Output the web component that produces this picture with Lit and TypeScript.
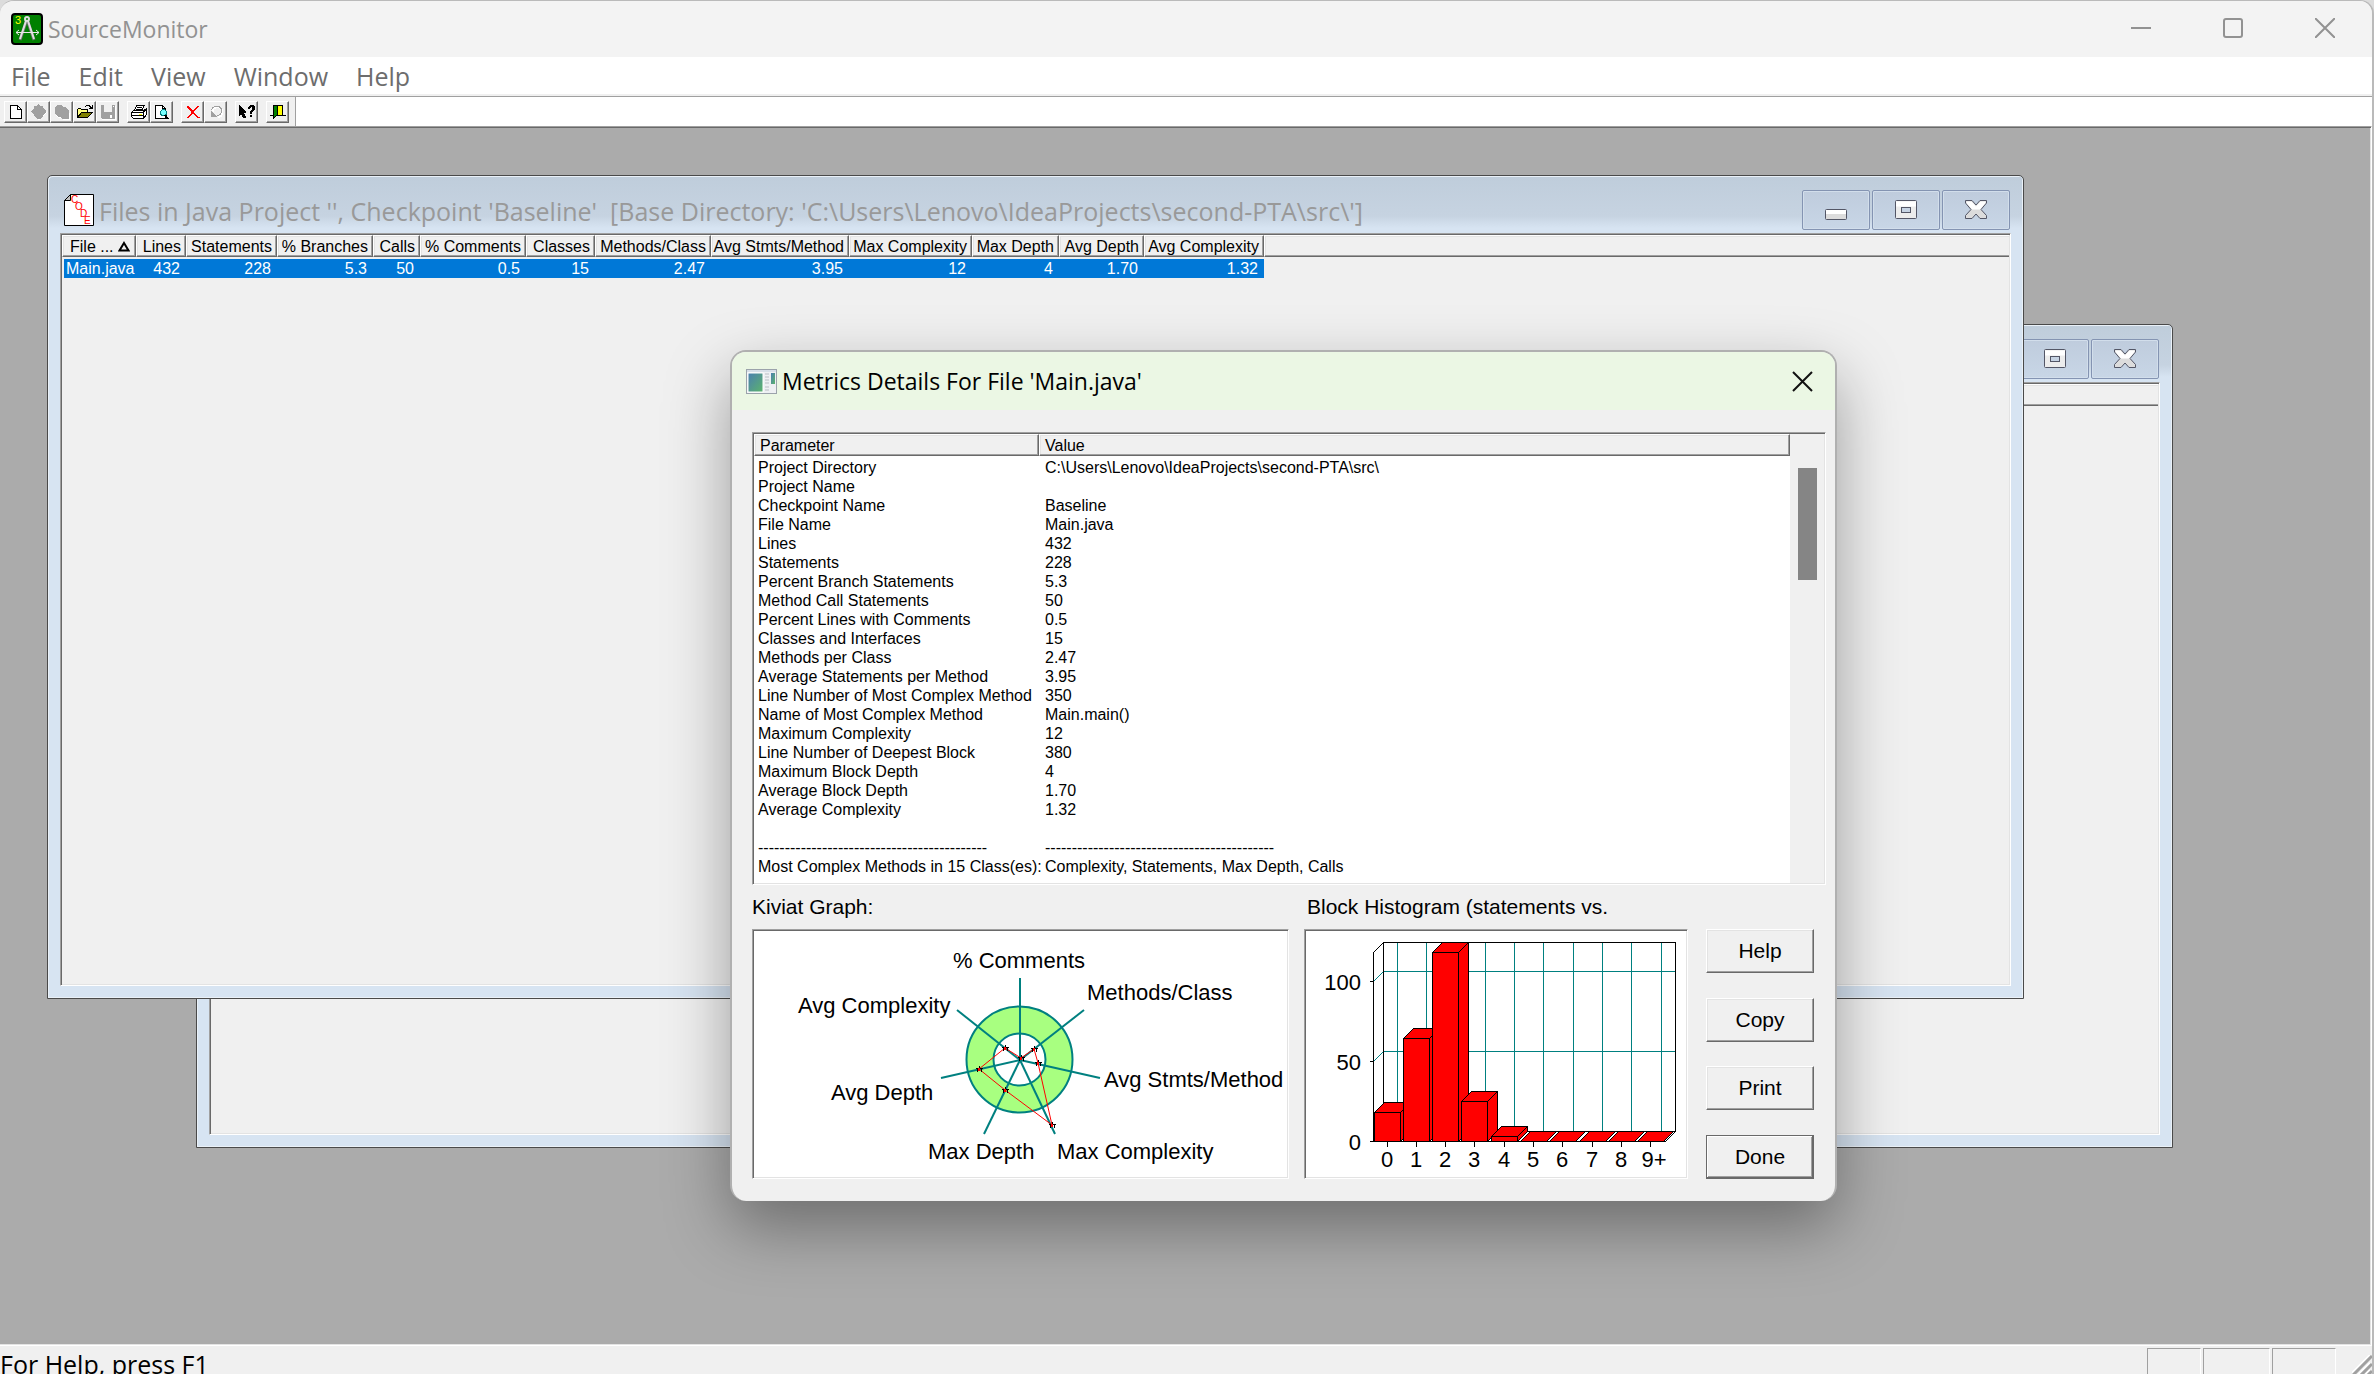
import { LitElement, html, svg, css, nothing, TemplateResult } from "lit";
import { customElement, property } from "lit/decorators.js";
import { classMap } from "lit/directives/class-map.js";

interface Column {
  name: string;
  value: string;
  width: number;
}

const COLUMNS: Column[] = [
  { name: "File ...", value: "Main.java", width: 74 },
  { name: "Lines", value: "432", width: 50 },
  { name: "Statements", value: "228", width: 91 },
  { name: "% Branches", value: "5.3", width: 96 },
  { name: "Calls", value: "50", width: 47 },
  { name: "% Comments", value: "0.5", width: 106 },
  { name: "Classes", value: "15", width: 69 },
  { name: "Methods/Class", value: "2.47", width: 116 },
  { name: "Avg Stmts/Method", value: "3.95", width: 138 },
  { name: "Max Complexity", value: "12", width: 123 },
  { name: "Max Depth", value: "4", width: 87 },
  { name: "Avg Depth", value: "1.70", width: 85 },
  { name: "Avg Complexity", value: "1.32", width: 120 },
];

const DASHES = "-".repeat(43);

const PARAMETERS: [string, string][] = [
  ["Project Directory", "C:\\Users\\Lenovo\\IdeaProjects\\second-PTA\\src\\"],
  ["Project Name", ""],
  ["Checkpoint Name", "Baseline"],
  ["File Name", "Main.java"],
  ["Lines", "432"],
  ["Statements", "228"],
  ["Percent Branch Statements", "5.3"],
  ["Method Call Statements", "50"],
  ["Percent Lines with Comments", "0.5"],
  ["Classes and Interfaces", "15"],
  ["Methods per Class", "2.47"],
  ["Average Statements per Method", "3.95"],
  ["Line Number of Most Complex Method", "350"],
  ["Name of Most Complex Method", "Main.main()"],
  ["Maximum Complexity", "12"],
  ["Line Number of Deepest Block", "380"],
  ["Maximum Block Depth", "4"],
  ["Average Block Depth", "1.70"],
  ["Average Complexity", "1.32"],
  ["", ""],
  [DASHES, DASHES],
  ["Most Complex Methods in 15 Class(es):", "Complexity, Statements, Max Depth, Calls"],
];

/* Toolbar glyphs, each on a 16 x 16 grid. */
const glyph = (body: TemplateResult) =>
  html`<svg width="16" height="16" viewBox="0 0 16 16" shape-rendering="crispEdges" aria-hidden="true">${body}</svg>`;

const GLYPHS: Record<string, TemplateResult> = {
  New: glyph(svg`
    <path d="M2.500 1.500h7l4 4v9h-11z" fill="#fff" stroke="#000"/>
    <path d="M9.500 1.500v4h4" fill="none" stroke="#000"/>`),
  "New checkpoint": glyph(svg`
    <path d="M8 2l2 2h2l1 2 3 2-3 3-1 2-4 3-4-3z" fill="#fff"/>
    <path d="M7 0l2 2h3v2l3 3v1l-3 3v1l-3 3H7l-4-3v-1L0 8V7l3-3V2h2z" fill="#a0a0a0"/>`),
  "Delete checkpoint": glyph(svg`
    <path d="M5 3h5l4 3 2 4v6H9l-2-2H4L2 11z" fill="#fff"/>
    <path d="M3 1h5l1 2h3l3 4v8H8l-1-2H4l-3-3V3z" fill="#a0a0a0"/>`),
  Open: glyph(svg`
    <path d="M1 5h3l1 1h6v3H5l-4 5z" fill="#ffff80"/>
    <path d="M.5 13.500V5.500l1-1h2l1 1h6v3" fill="none" stroke="#000"/>
    <path d="M.5 13.500l4-5h11l-5 5z" fill="#808000" stroke="#000"/>
    <path d="M8 2h1V1h4v1h1v1h1V1h1v4h-4V4h1V3h-1V2H9v1H8z" fill="#000"/>`),
  Save: glyph(svg`
    <path d="M2 2h14v14H2z" fill="#fff"/>
    <path d="M1 1h14v14H2l-1-1z" fill="#a0a0a0"/>
    <path d="M4 1h8v7H4z" fill="#f0f0f0"/><path d="M13 2h1v1h-1zM10 11h2v3h-2z" fill="#fff"/>`),
  Print: glyph(svg`
    <path d="M5.500 1.500h8l-3 5h-7z" fill="#fff" stroke="#000"/>
    <path d="M6 3h5v1H6zM5 5h5v1H5z" fill="#000"/>
    <path d="M.5 8.500l2-2h10l3-2v6l-3 4h-10l-2-2z" fill="#fff" stroke="#000"/>
    <path d="M1 8.500h11l3-3M12.500 8.500v5M1 11.500h11" fill="none" stroke="#000"/>
    <path d="M8 10h3v1H8z" fill="#ff0"/>`),
  "Print preview": glyph(svg`
    <path d="M1.500 1.500h7l3 3v10h-10z" fill="#fff" stroke="#000"/>
    <path d="M8.500 1.500v3h3" fill="none" stroke="#000"/>
    <circle cx="9.500" cy="8.500" r="3" fill="#7ff" stroke="#008080"/>
    <path d="M11 11l3 4" stroke="#000" stroke-width="2"/>`),
  Delete: glyph(svg`
    <path d="M2 2h2v1h1v1h1v1h1v1h2V5h1V4h1V3h1V2h2v1h-1v1h-1v1h-1v1h-1v1H9v2h1v1h1v1h1v1h1v1h2v1h-3v-1h-1v-1h-1v-1H9v-1H7v1H6v1H5v1H4v1H2v-1h1v-1h1v-1h1v-1h1V7H5V6H4V5H3V4H2z" fill="#f00"/>`),
  Undo: glyph(svg`
    <path d="M4.500 7.500c1-6 10-5 10 0 0 4-3 6-5 6" fill="none" stroke="#fff" stroke-width="2"/>
    <path d="M3.500 6.500c1-6 10-5 10 0 0 4-3 5-5 5" fill="none" stroke="#a0a0a0"/>
    <path d="M3 7l6 6H3z" fill="#a0a0a0"/>`),
  "Context help": glyph(svg`
    <path d="M.5 1.500l6 6v1h-2l2 5h-2l-2-4-2 2z" fill="#000" stroke="#000"/>
    <path d="M9 5V3l2-2h3l2 2v2l-3 3v2h-2V7l2-2V3h-1l-1 2zM11 11h2v2h-2z" fill="#000"/>`),
  Exit: glyph(svg`
    <path d="M6.500 1.500h6v10h-6z" fill="#ff0" stroke="#000"/>
    <path d="M3.500 1.500h4v9l-4 4z" fill="#008000" stroke="#000"/>
    <path d="M0 11.500h4M8 11.500h8" stroke="#000"/>`),
};

const TOOL_GROUPS: string[][] = [
  ["New", "New checkpoint", "Delete checkpoint", "Open", "Save"],
  ["Print", "Print preview"],
  ["Delete", "Undo"],
  ["Context help"],
  ["Exit"],
];

const DISABLED = new Set(["New checkpoint", "Delete checkpoint", "Save", "Undo"]);

@customElement("kiviat-graph")
export class KiviatGraph extends LitElement {
  static styles = css`
    :host { display: block; }
    svg { display: block; }
    text { font: 22px "Liberation Sans", Arial, sans-serif; fill: #000; }
  `;

  private axes: { x: number; y: number; label: string; lx: number; ly: number }[] = [
    { x: 266, y: 47, label: "% Comments", lx: 199, ly: 37 },
    { x: 330, y: 79, label: "Methods/Class", lx: 333, ly: 69 },
    { x: 346, y: 147, label: "Avg Stmts/Method", lx: 350, ly: 156 },
    { x: 301, y: 203, label: "Max Complexity", lx: 303, ly: 228 },
    { x: 230, y: 203, label: "Max Depth", lx: 174, ly: 228 },
    { x: 187, y: 147, label: "Avg Depth", lx: 77, ly: 169 },
    { x: 203, y: 79, label: "Avg Complexity", lx: 44, ly: 82 },
  ];

  private points: [number, number][] = [
    [267, 127], [280, 118], [284, 132], [298, 194], [251, 159], [225, 138], [251, 117],
  ];

  render() {
    return html`<svg width="533" height="246" viewBox="0 0 533 246" role="img" aria-label="Kiviat Graph">
      <circle cx="265.5" cy="128.5" r="53" fill="#a8ff80" stroke="#008080" stroke-width="2" />
      <circle cx="265.5" cy="128.5" r="26" fill="#fff" stroke="#008080" stroke-width="2" />
      ${this.axes.map((a) => svg`<line x1="266" y1="129" x2=${a.x} y2=${a.y} stroke="#008080" stroke-width="2"/>`)}
      <polygon points=${this.points.map((p) => p.join(",")).join(" ")} fill="none" stroke="#f00" stroke-width="1" />
      ${this.points.map(
        ([x, y]) => svg`<g transform="translate(${x} ${y})" shape-rendering="crispEdges">
          <path d="M-3 -1H4M-2 3V-1M2 3V-1M0 -3V2" stroke="#000" fill="none"/>
          <rect x="-1" y="-1" width="2" height="3" fill="#f00"/></g>`,
      )}
      ${this.axes.map((a) => svg`<text x=${a.lx} y=${a.ly}>${a.label}</text>`)}
    </svg>`;
  }
}

@customElement("block-histogram")
export class BlockHistogram extends LitElement {
  static styles = css`
    :host { display: block; }
    svg { display: block; }
    text { font: 22px "Liberation Sans", Arial, sans-serif; fill: #000; }
    .x { text-anchor: middle; }
    .y { text-anchor: end; }
  `;

  private bars: { x: number; top: number; label: string }[] = [
    { x: 68, top: 181, label: "0" },
    { x: 97, top: 107, label: "1" },
    { x: 126, top: 21, label: "2" },
    { x: 155, top: 170, label: "3" },
    { x: 185, top: 205, label: "4" },
    { x: 214, top: 210, label: "5" },
    { x: 243, top: 210, label: "6" },
    { x: 273, top: 210, label: "7" },
    { x: 302, top: 210, label: "8" },
    { x: 331, top: 210, label: "9+" },
  ];

  private bar(x: number, top: number) {
    const r = x + 26;
    return svg`
      <path d="M${x} ${top}l10 -10H${r + 10}L${r} ${top}z"/>
      <path d="M${r} ${top}l10 -10V200L${r} 210z"/>
      <path d="M${x} ${top}H${r}V210H${x}z"/>`;
  }

  render() {
    return html`<svg width="380" height="246" viewBox="0 0 380 246" role="img" aria-label="Block Histogram">
      <g transform="translate(0.5 0.5)" shape-rendering="crispEdges" fill="none" stroke="#000">
        <path
          d="M77 40H369M77 120H369M67 50l10 -10M67 130l10 -10M91 11V200M120 11V200M150 11V200M179 11V200M208 11V200M237 11V200M267 11V200M296 11V200M325 11V200M355 11V200"
          stroke="#008080"
        />
        <path d="M77 11H369V200H77zM77 11L67 21V210H359L369 200M67 210l10 -10" />
        <path d="M63 50H67M63 130H67M63 210H67" />
        ${this.bars.map((b) => svg`<path d="M${b.x + 13} 210v5"/>`)}
        <g fill="#f00">${this.bars.map((b) => this.bar(b.x, b.top))}</g>
      </g>
      <text class="y" x="55" y="59">100</text>
      <text class="y" x="55" y="139">50</text>
      <text class="y" x="55" y="219">0</text>
      ${this.bars.map((b) => svg`<text class="x" x=${b.label === "9+" ? b.x + 17 : b.x + 13} y="236">${b.label}</text>`)}
    </svg>`;
  }
}

@customElement("metrics-dialog")
export class MetricsDialog extends LitElement {
  static styles = css`
    :host {
      display: block;
      box-sizing: border-box;
      border: 2px solid #b0b0b0;
      border-bottom: 0;
      border-radius: 16px;
      background: #f0f0f0;
      box-shadow: 0 26px 64px rgba(0, 0, 0, 0.36);
      overflow: hidden;
      font-family: "Liberation Sans", Arial, sans-serif;
      color: #000;
    }
    .title {
      display: flex;
      align-items: center;
      height: 58px;
      padding: 0 22px 0 14px;
      background: #ebf7e4;
    }
    .title svg { display: block; flex: none; }
    .title h2 {
      flex: 1;
      margin: 0 0 0 5px;
      font: 23px/32px "Open Sans", "Segoe UI", sans-serif;
      white-space: nowrap;
    }
    .close { border: 0; padding: 0; background: none; }
    .body { padding: 22px 9px 22px 20px; }
    .sunken {
      border: 1px solid;
      border-color: #a0a0a0 #fff #fff #a0a0a0;
      box-shadow: inset 1px 1px #696969, inset -1px -1px #e3e3e3;
      padding: 1px;
      background: #fff;
    }
    .list { display: flex; height: 449px; overflow: hidden; }
    .rows { flex: 1; min-width: 0; }
    table { width: 100%; border-collapse: separate; border-spacing: 0; table-layout: fixed; }
    th, td { padding: 0; text-align: left; font-size: 16px; font-weight: 400; line-height: 19px; white-space: nowrap; }
    th {
      box-sizing: border-box;
      height: 22px;
      padding-left: 5px;
      background: #f0f0f0;
      border: 1px solid;
      border-color: #fff #696969 #696969 #fff;
      box-shadow: inset -1px -1px #a0a0a0, inset 1px 1px #e3e3e3;
    }
    td { padding-left: 4px; height: 19px; }
    td + td { padding-left: 6px; }
    tbody tr:first-child td { padding-top: 2px; }
    .name { width: 285px; }
    .scroll { flex: 0 0 34px; box-sizing: border-box; padding: 34px 7px 0 8px; background: #f0f0f0; }
    .thumb { height: 112px; background: #858585; }
    .lower { display: grid; grid-template-columns: 537px 384px 108px; column-gap: 15px; padding-right: 11px; }
    .lower h3 { margin: 0; font-size: 21px; font-weight: 400; line-height: 44px; white-space: nowrap; }
    .lower h3.hist { padding-left: 3px; }
    .buttons { display: flex; flex-direction: column; justify-content: space-between; margin-left: 3px; width: 108px; }
    .buttons button {
      height: 44px;
      padding: 0;
      border: 1px solid;
      border-color: #fff #696969 #696969 #fff;
      box-shadow: inset -1px -1px #a0a0a0, inset 1px 1px #e3e3e3;
      background: #f0f0f0;
      font: 21px "Liberation Sans", Arial, sans-serif;
      color: #000;
    }
    .buttons button.default {
      border-color: #696969;
      box-shadow: inset -1px -1px #696969, inset 1px 1px #fff, inset -2px -2px #a0a0a0;
    }
  `;

  render() {
    return html`
      <div class="title">
        <svg width="31" height="25" viewBox="0 0 31 25" aria-hidden="true">
          <defs>
            <linearGradient id="pane" x1="0" y1="0" x2="1" y2="1">
              <stop offset="0" stop-color="#4a7fb0" /><stop offset="1" stop-color="#5cb46c" />
            </linearGradient>
          </defs>
          <rect x=".5" y=".5" width="30" height="24" fill="#eef0f3" stroke="#9ba3ab" />
          <rect x="1" y="1" width="29" height="2" fill="#d7dfe8" />
          <rect x="2" y="4" width="15" height="19" fill="url(#pane)" stroke="#fff" />
          <path d="M19 5h4M19 8h4M19 11h4M19 14h4M19 18h4M19 21h4" stroke="#b9bec4" />
          <rect x="25" y="4" width="4" height="11" fill="url(#pane)" />
        </svg>
        <h2>Metrics Details For File 'Main.java'</h2>
        <button class="close" aria-label="Close">
          <svg width="21" height="21" viewBox="0 0 21 21" aria-hidden="true">
            <path d="M1 1L20 20M20 1L1 20" stroke="#111" stroke-width="2" />
          </svg>
        </button>
      </div>
      <div class="body">
        <div class="sunken list">
          <div class="rows">
            <table>
              <thead><tr><th class="name" scope="col">Parameter</th><th scope="col">Value</th></tr></thead>
              <tbody>${PARAMETERS.map(([name, value]) => html`<tr><td>${name}</td><td>${value}</td></tr>`)}</tbody>
            </table>
          </div>
          <div class="scroll"><div class="thumb"></div></div>
        </div>
        <div class="lower">
          <h3>Kiviat Graph:</h3>
          <h3 class="hist">Block Histogram (statements vs.</h3>
          <span></span>
          <div class="sunken"><kiviat-graph></kiviat-graph></div>
          <div class="sunken"><block-histogram></block-histogram></div>
          <div class="buttons">
            <button>Help</button><button>Copy</button><button>Print</button><button class="default">Done</button>
          </div>
        </div>
      </div>
    `;
  }
}

@customElement("mdi-window")
export class MdiWindow extends LitElement {
  @property() heading = "";

  static styles = css`
    :host {
      display: flex;
      flex-direction: column;
      box-sizing: border-box;
      border: 1px solid #4a4a4a;
      border-radius: 5px 5px 0 0;
      background: linear-gradient(#bfcddb 0, #c6d3e1 40px, #d7e4f2 52px);
      box-shadow: inset 1px 1px #eaf1f8, inset -1px -1px #eaf1f8;
      padding: 0 12px 12px;
    }
    .title { display: flex; height: 57px; }
    .title > svg { flex: none; margin: 18px 5px 0 4px; }
    h2 { flex: 1; margin: 18px 0 0; font: 25px/34px "Open Sans", "Segoe UI", sans-serif; color: #999; white-space: nowrap; }
    .controls { display: flex; gap: 2px; padding: 14px 1px 0 0; }
    .controls button {
      display: grid;
      place-items: center;
      box-sizing: border-box;
      width: 68px;
      height: 40px;
      padding: 0;
      border: 1px solid #8494b2;
      border-radius: 2px;
      background: linear-gradient(#bfccdd, #c8d6e6);
      box-shadow: inset 0 0 0 1px #d2deeb;
    }
    .client {
      flex: 1;
      border: 1px solid;
      border-color: #a0a0a0 #fff #fff #a0a0a0;
      box-shadow: inset 1px 1px #696969, inset -1px -1px #e3e3e3;
      padding: 1px;
      background: #f0f0f0;
    }
  `;

  render() {
    return html`
      <div class="title">
        <svg width="30" height="32" viewBox="0 0 30 32" aria-hidden="true">
          <path d="M6.500 .5H29.500V31.500H.5V6.500z" fill="#fff" stroke="#000" />
          <path d="M6.500 .5V6.500H.5z" fill="#c0c0c0" stroke="#000" />
          <g font-family="Liberation Sans" font-size="10" fill="#f00">
            <text x="7" y="9">C</text><text x="11" y="16">O</text><text x="16" y="23">D</text><text x="20" y="30">E</text>
          </g>
        </svg>
        <h2>${this.heading || nothing}</h2>
        <div class="controls">
          <button aria-label="Minimize">
            <svg width="24" height="22" viewBox="0 0 24 22"><rect x="1.500" y="10.500" width="21" height="10" rx="1" fill="#dcdcdc" stroke="#535666"/><path d="M2 13H22" stroke="#fff" stroke-width="4"/></svg>
          </button>
          <button aria-label="Restore">
            <svg width="24" height="22" viewBox="0 0 24 22"><rect x="1.500" y="1.500" width="21" height="18" rx="1" fill="#ececec" stroke="#535666"/><path d="M2 5H22" stroke="#fff" stroke-width="5"/><rect x="7.500" y="8.500" width="9" height="5" fill="#c6d3e3" stroke="#535666"/></svg>
          </button>
          <button aria-label="Close">
            <svg width="24" height="22" viewBox="0 0 24 22"><path d="M1.500 1.500H8L12 6l4-4.500h6.500V4L17 10.500l5.500 6v3H16L12 15l-4 4.500H1.500v-3L7 10.500 1.500 4z" fill="#dcdcdc" stroke="#535666"/><path d="M2.500 2.500H7.500L12 7.500l4.500-5H21.500V4L16 10.500H8L2.500 4z" fill="#fff"/></svg>
          </button>
        </div>
      </div>
      <div class="client"><slot></slot></div>
    `;
  }
}

@customElement("file-list")
export class FileList extends LitElement {
  @property({ attribute: false }) columns: Column[] = [];

  static styles = css`
    :host { display: block; font-family: "Liberation Sans", Arial, sans-serif; }
    table { width: 100%; border-collapse: separate; border-spacing: 0; table-layout: fixed; }
    th, td { padding: 0; font-size: 16px; font-weight: 400; line-height: 19px; white-space: nowrap; text-align: right; }
    th {
      box-sizing: border-box;
      height: 22px;
      padding-right: 4px;
      border: 1px solid;
      border-color: #fff #696969 #696969 #fff;
      box-shadow: inset -1px -1px #a0a0a0, inset 1px 1px #e3e3e3;
      color: #000;
    }
    th.first { text-align: left; padding-left: 7px; padding-right: 0; }
    th.first svg { margin-left: 4px; }
    td.cell { background: #0078d7; background-clip: padding-box; color: #fff; border-top: 2px solid transparent; padding-right: 6px; }
    td.first { text-align: left; padding: 0 0 0 2px; border-left: 2px solid transparent; }
    th.rest { border-right: 0; box-shadow: inset 0 -1px #a0a0a0, inset 1px 1px #e3e3e3; }
  `;

  render() {
    const cell = (i: number) => classMap({ cell: true, first: i === 0 });
    return html`<table>
      <thead>
        <tr>
          ${this.columns.map(
            (c, i) => html`<th scope="col" class=${classMap({ first: i === 0 })} style="width:${c.width}px">
              ${c.name}${i === 0
                ? html`<svg width="12" height="11" viewBox="0 0 12 11" aria-hidden="true"><path d="M6 2L10.500 9.500H1.500z" fill="none" stroke="#000" stroke-width="2" /></svg>`
                : nothing}
            </th>`,
          )}
          <th class="rest"></th>
        </tr>
      </thead>
      <tbody>
        ${this.columns.length
          ? html`<tr>${this.columns.map((c, i) => html`<td class=${cell(i)}>${c.value}</td>`)}<td></td></tr>`
          : nothing}
      </tbody>
    </table>`;
  }
}

@customElement("app-root")
export class AppRoot extends LitElement {
  static styles = css`
    :host { display: block; background: #dcdcdc; font-family: "Open Sans", "Segoe UI", sans-serif; }
    .frame {
      display: flex;
      flex-direction: column;
      box-sizing: border-box;
      height: 100vh;
      overflow: hidden;
      border: solid #bababa;
      border-width: 1px 2px 0 0;
      border-radius: 14px 14px 0 0;
      background: #f0f0f0;
    }
    .title { display: flex; flex: 0 0 56px; align-items: center; padding: 0 1px 0 11px; background: #f3f3f3; }
    .title h1 { flex: 1; margin: 0 0 0 5px; font-size: 23px; font-weight: 400; line-height: 32px; color: #929292; }
    .title > svg { display: block; }
    .winbtns { display: flex; }
    .winbtns button { display: grid; place-items: center; width: 92px; height: 56px; padding: 0 0 2px; border: 0; background: none; }
    nav { display: flex; flex: 0 0 37px; align-items: center; gap: 28px; padding-left: 11px; background: #fff; border-bottom: 2px solid #f0f0f0; }
    nav button { padding: 0; border: 0; background: none; font: 25px/34px "Open Sans", "Segoe UI", sans-serif; color: #6d6d6d; }
    .toolrow { display: flex; flex: 0 0 29px; border-top: 1px solid #a0a0a0; background: #fff; }
    .tools { display: flex; gap: 8px; padding: 4px 6px 0 4px; background: #f0f0f0; border-right: 1px solid #a0a0a0; }
    .group { display: flex; }
    .group button {
      display: grid;
      place-items: center;
      box-sizing: border-box;
      width: 23px;
      height: 22px;
      padding: 0;
      border: 1px solid;
      border-color: #fff #696969 #696969 #fff;
      box-shadow: inset -1px -1px #a0a0a0;
      background: #f0f0f0;
    }
    .desktop {
      position: relative;
      flex: 1;
      overflow: hidden;
      border-top: 1px solid #a0a0a0;
      border-right: 1px solid #fff;
      border-bottom: 1px solid #fff;
      box-shadow: inset 0 1px #696969, inset -1px -1px #e3e3e3;
      background: #ababab;
    }
    mdi-window { position: absolute; width: 1977px; height: 824px; }
    .back { left: 196px; top: 197px; }
    .front { left: 47px; top: 48px; }
    metrics-dialog { position: absolute; left: 730px; top: 223px; width: 1107px; }
    footer { display: flex; flex: 0 0 28px; overflow: hidden; background: #f0f0f0; font-size: 25px; line-height: 36px; color: #000; }
    .msg { flex: 1; white-space: nowrap; }
    .panes { display: flex; gap: 2px; padding-top: 2px; }
    .pane { box-sizing: border-box; height: 34px; border: 1px solid; border-color: #a0a0a0 #fff #fff #a0a0a0; }
    .caps { width: 54px; }
    .num { width: 67px; }
    .scrl { width: 64px; }
    .grip { align-self: flex-start; margin: 9px 0 0 16px; }
  `;

  render() {
    return html`<div class="frame">
      <header class="title">
        <svg width="32" height="32" viewBox="0 0 32 32" aria-hidden="true">
          <rect x="1" y="1" width="30" height="30" rx="3" fill="#008000" stroke="#000" stroke-width="2" />
          <text x="4" y="11" font-family="Liberation Sans" font-size="11" fill="#ff0">3</text>
          <path d="M15 9L9 27M17 9L23 27" stroke="#707070" stroke-width="3" fill="none" />
          <path d="M15 8L9 26M17 8L23 26" stroke="#e0e0e0" stroke-width="2" fill="none" />
          <circle cx="16" cy="6" r="2" fill="none" stroke="#e0e0e0" stroke-width="2" />
          <path d="M5 19.500H28M8 17L5 19.500L8 22M25 17L28 19.500L25 22" stroke="#e8e8e8" fill="none" />
        </svg>
        <h1>SourceMonitor</h1>
        <div class="winbtns">
          <button aria-label="Minimize"><svg width="20" height="20" viewBox="0 0 20 20"><path d="M0 10H20" stroke="#929292" stroke-width="2" /></svg></button>
          <button aria-label="Maximize"><svg width="20" height="20" viewBox="0 0 20 20"><rect x="1" y="1" width="18" height="18" rx="2" fill="none" stroke="#929292" stroke-width="2" /></svg></button>
          <button aria-label="Close"><svg width="20" height="20" viewBox="0 0 20 20"><path d="M0 0L20 20M20 0L0 20" stroke="#929292" stroke-width="2" /></svg></button>
        </div>
      </header>
      <nav>${["File", "Edit", "View", "Window", "Help"].map((m) => html`<button>${m}</button>`)}</nav>
      <div class="toolrow">
        <div class="tools">
          ${TOOL_GROUPS.map(
            (g) => html`<div class="group">
              ${g.map((t) => html`<button aria-label=${t} ?disabled=${DISABLED.has(t)}>${GLYPHS[t]}</button>`)}
            </div>`,
          )}
        </div>
      </div>
      <main class="desktop">
        <mdi-window class="back"><file-list></file-list></mdi-window>
        <mdi-window
          class="front"
          heading="Files in Java Project '', Checkpoint 'Baseline'&nbsp; [Base Directory: 'C:\\Users\\Lenovo\\IdeaProjects\\second-PTA\\src\\']"
        ><file-list .columns=${COLUMNS}></file-list></mdi-window>
        <metrics-dialog></metrics-dialog>
      </main>
      <footer>
        <span class="msg">For Help, press F1</span>
        <div class="panes"><span class="pane caps"></span><span class="pane num"></span><span class="pane scrl"></span></div>
        <svg class="grip" width="20" height="20" viewBox="0 0 20 20" aria-hidden="true">
          <path d="M0 20L20 0M8 20L20 8M15 20L20 15" stroke="#fff" stroke-width="2" transform="translate(-2 0)" />
          <path d="M1 20L20 1M8 21L20 9M15 21L20 16" stroke="#a0a0a0" stroke-width="3" />
        </svg>
      </footer>
    </div>`;
  }
}
